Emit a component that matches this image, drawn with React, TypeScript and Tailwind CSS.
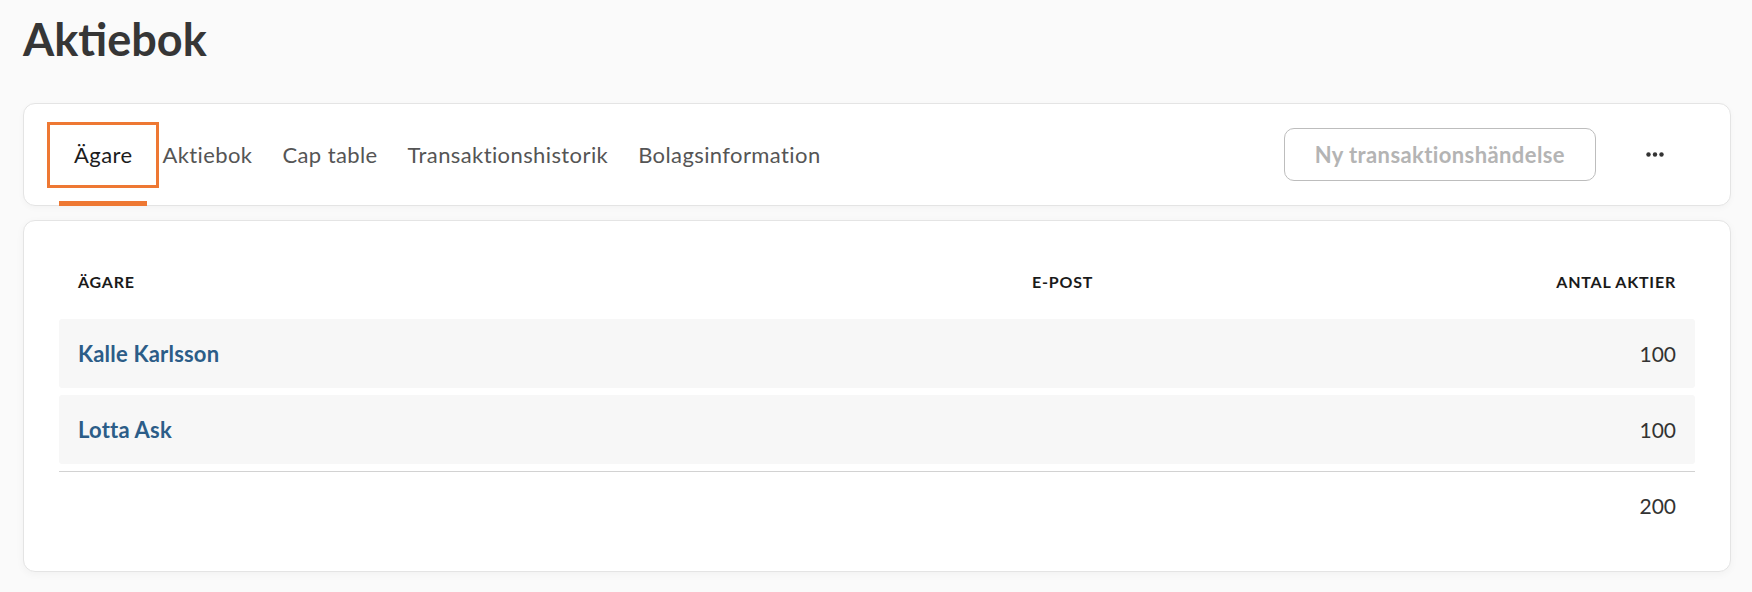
import { useState } from "react";

type Owner = { name: string; email: string; shares: number };

const owners: Owner[] = [
  { name: "Kalle Karlsson", email: "", shares: 100 },
  { name: "Lotta Ask", email: "", shares: 100 },
];

const tabs = ["Ägare", "Aktiebok", "Cap table", "Transaktionshistorik", "Bolagsinformation"];

function Tabs() {
  const [active, setActive] = useState(0);
  return (
    <div className="flex h-[103px] items-stretch rounded-[12px] border border-[#e4e4e4] bg-white pl-[35px] shadow-[0_2px_6px_rgba(0,0,0,0.03)]">
      {tabs.map((t, i) => (
        <div key={t} className="relative flex items-center">
          <button
            onClick={() => setActive(i)}
            className={`h-[42px] px-[15px] text-[22px] leading-none tracking-[0.4px] ${
              active === i
                ? "text-[#1c1c1c] outline-[3px] outline-offset-[9px] outline-solid outline-[#ee7833]"
                : "text-[#555555]"
            }`}
          >
            {t}
          </button>
          {active === i && (
            <span className="absolute inset-x-0 -bottom-px h-[5px] bg-[#ee7833]" />
          )}
        </div>
      ))}
      <div className="ml-auto flex items-center gap-[39px] pr-[55px]">
        <button className="h-[53px] rounded-[10px] border border-[#bdbdbd] px-[30px] text-[22px] font-bold leading-none tracking-[0.4px] text-[#b4b4b4]">
          Ny transaktionshändelse
        </button>
        <button className="flex h-[40px] w-[40px] items-center justify-center">
          <svg width="18" height="5" viewBox="0 0 18 5">
            <circle cx="2.5" cy="2.5" r="2.2" fill="#333" />
            <circle cx="9" cy="2.5" r="2.2" fill="#333" />
            <circle cx="15.5" cy="2.5" r="2.2" fill="#333" />
          </svg>
        </button>
      </div>
    </div>
  );
}

function OwnerTable() {
  const total = owners.reduce((s, o) => s + o.shares, 0);
  return (
    <div className="rounded-[12px] border border-[#e4e4e4] bg-white px-[35px] pt-[31px] pb-[32px] shadow-[0_2px_8px_rgba(0,0,0,0.04)]">
      <div className="flex flex-col gap-[7px]">
        <div className="grid h-[60px] grid-cols-[954px_1fr_200px] items-center px-[19px] text-[16px] font-bold uppercase tracking-[0.05em] text-[#1a1a1a]">
          <span>Ägare</span>
          <span>E-post</span>
          <span className="text-right">Antal aktier</span>
        </div>
        {owners.map((o) => (
          <div
            key={o.name}
            className="grid h-[69px] grid-cols-[954px_1fr_200px] items-center rounded-[3px] bg-[#f7f7f7] px-[19px] text-[21px]"
          >
            <a href="#" className="text-[22px] font-bold tracking-[0.2px] text-[#2c5d88]">
              {o.name}
            </a>
            <span className="text-[#333]">{o.email}</span>
            <span className="text-right text-[#333]">{o.shares}</span>
          </div>
        ))}
        <div className="h-px bg-[#d2d2d2]" />
      </div>
      <div className="grid h-[67px] grid-cols-[954px_1fr_200px] items-center px-[19px] text-[21px] text-[#333]">
        <span />
        <span />
        <span className="text-right">{total}</span>
      </div>
    </div>
  );
}

export default function App() {
  return (
    <div className="min-h-[592px] bg-[#fafafa] pl-[23px] pr-[21px] pt-[17px] pb-[20px] font-['Lato',sans-serif]">
      <h1 className="mb-[41px] text-[45px] font-bold leading-none text-[#363636]">Aktiebok</h1>
      <div className="flex flex-col gap-[14px]">
        <Tabs />
        <OwnerTable />
      </div>
    </div>
  );
}
